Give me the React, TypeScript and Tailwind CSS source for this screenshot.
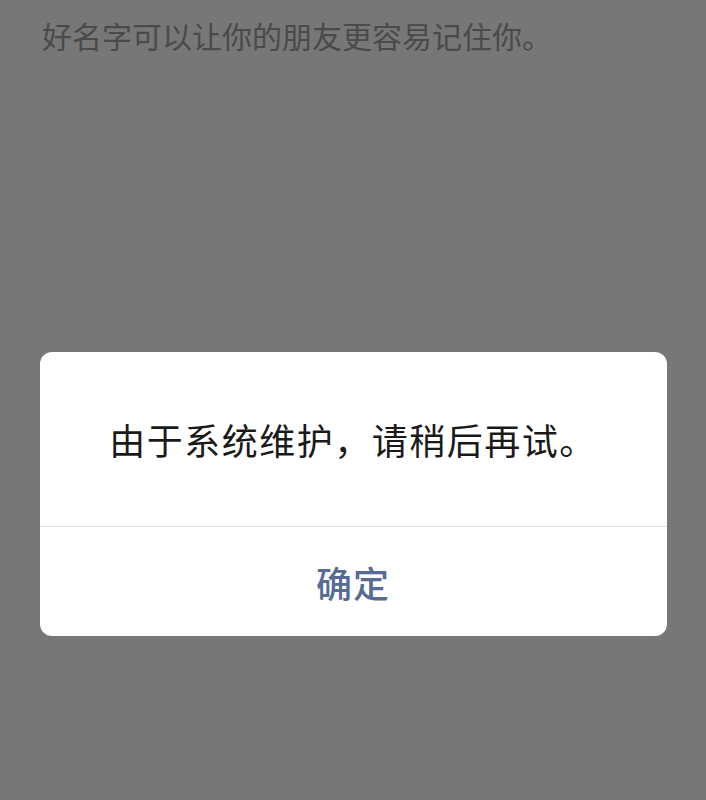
import React from "react";

export default function App() {
  return (
    <div
      className="relative w-full h-[800px] overflow-hidden bg-[#777777]"
      style={{ fontFamily: '"Noto Sans CJK SC", "Noto Sans", sans-serif' }}
    >
      {/* Page behind the mask */}
      <div className="pl-[42px] pt-[16px]">
        <p className="text-[30px] leading-[38px] text-[#4a4a4a]">
          好名字可以让你的朋友更容易记住你。
        </p>
      </div>

      {/* Dialog */}
      <div className="absolute inset-0 flex justify-center pt-[352px]">
        <div className="w-[627px] h-[284px] rounded-[12px] bg-white flex flex-col overflow-hidden">
          <div className="h-[175px] flex items-center justify-center border-b border-[#e3e3e3]">
            <p className="text-[36px] leading-[44px] text-[#1a1a1a] tracking-[1.5px]">
              由于系统维护，请稍后再试。
            </p>
          </div>
          <button className="flex-1 flex items-center justify-center">
            <span className="text-[36px] leading-[44px] text-[#576b95] font-medium tracking-[1px]">
              确定
            </span>
          </button>
        </div>
      </div>
    </div>
  );
}
